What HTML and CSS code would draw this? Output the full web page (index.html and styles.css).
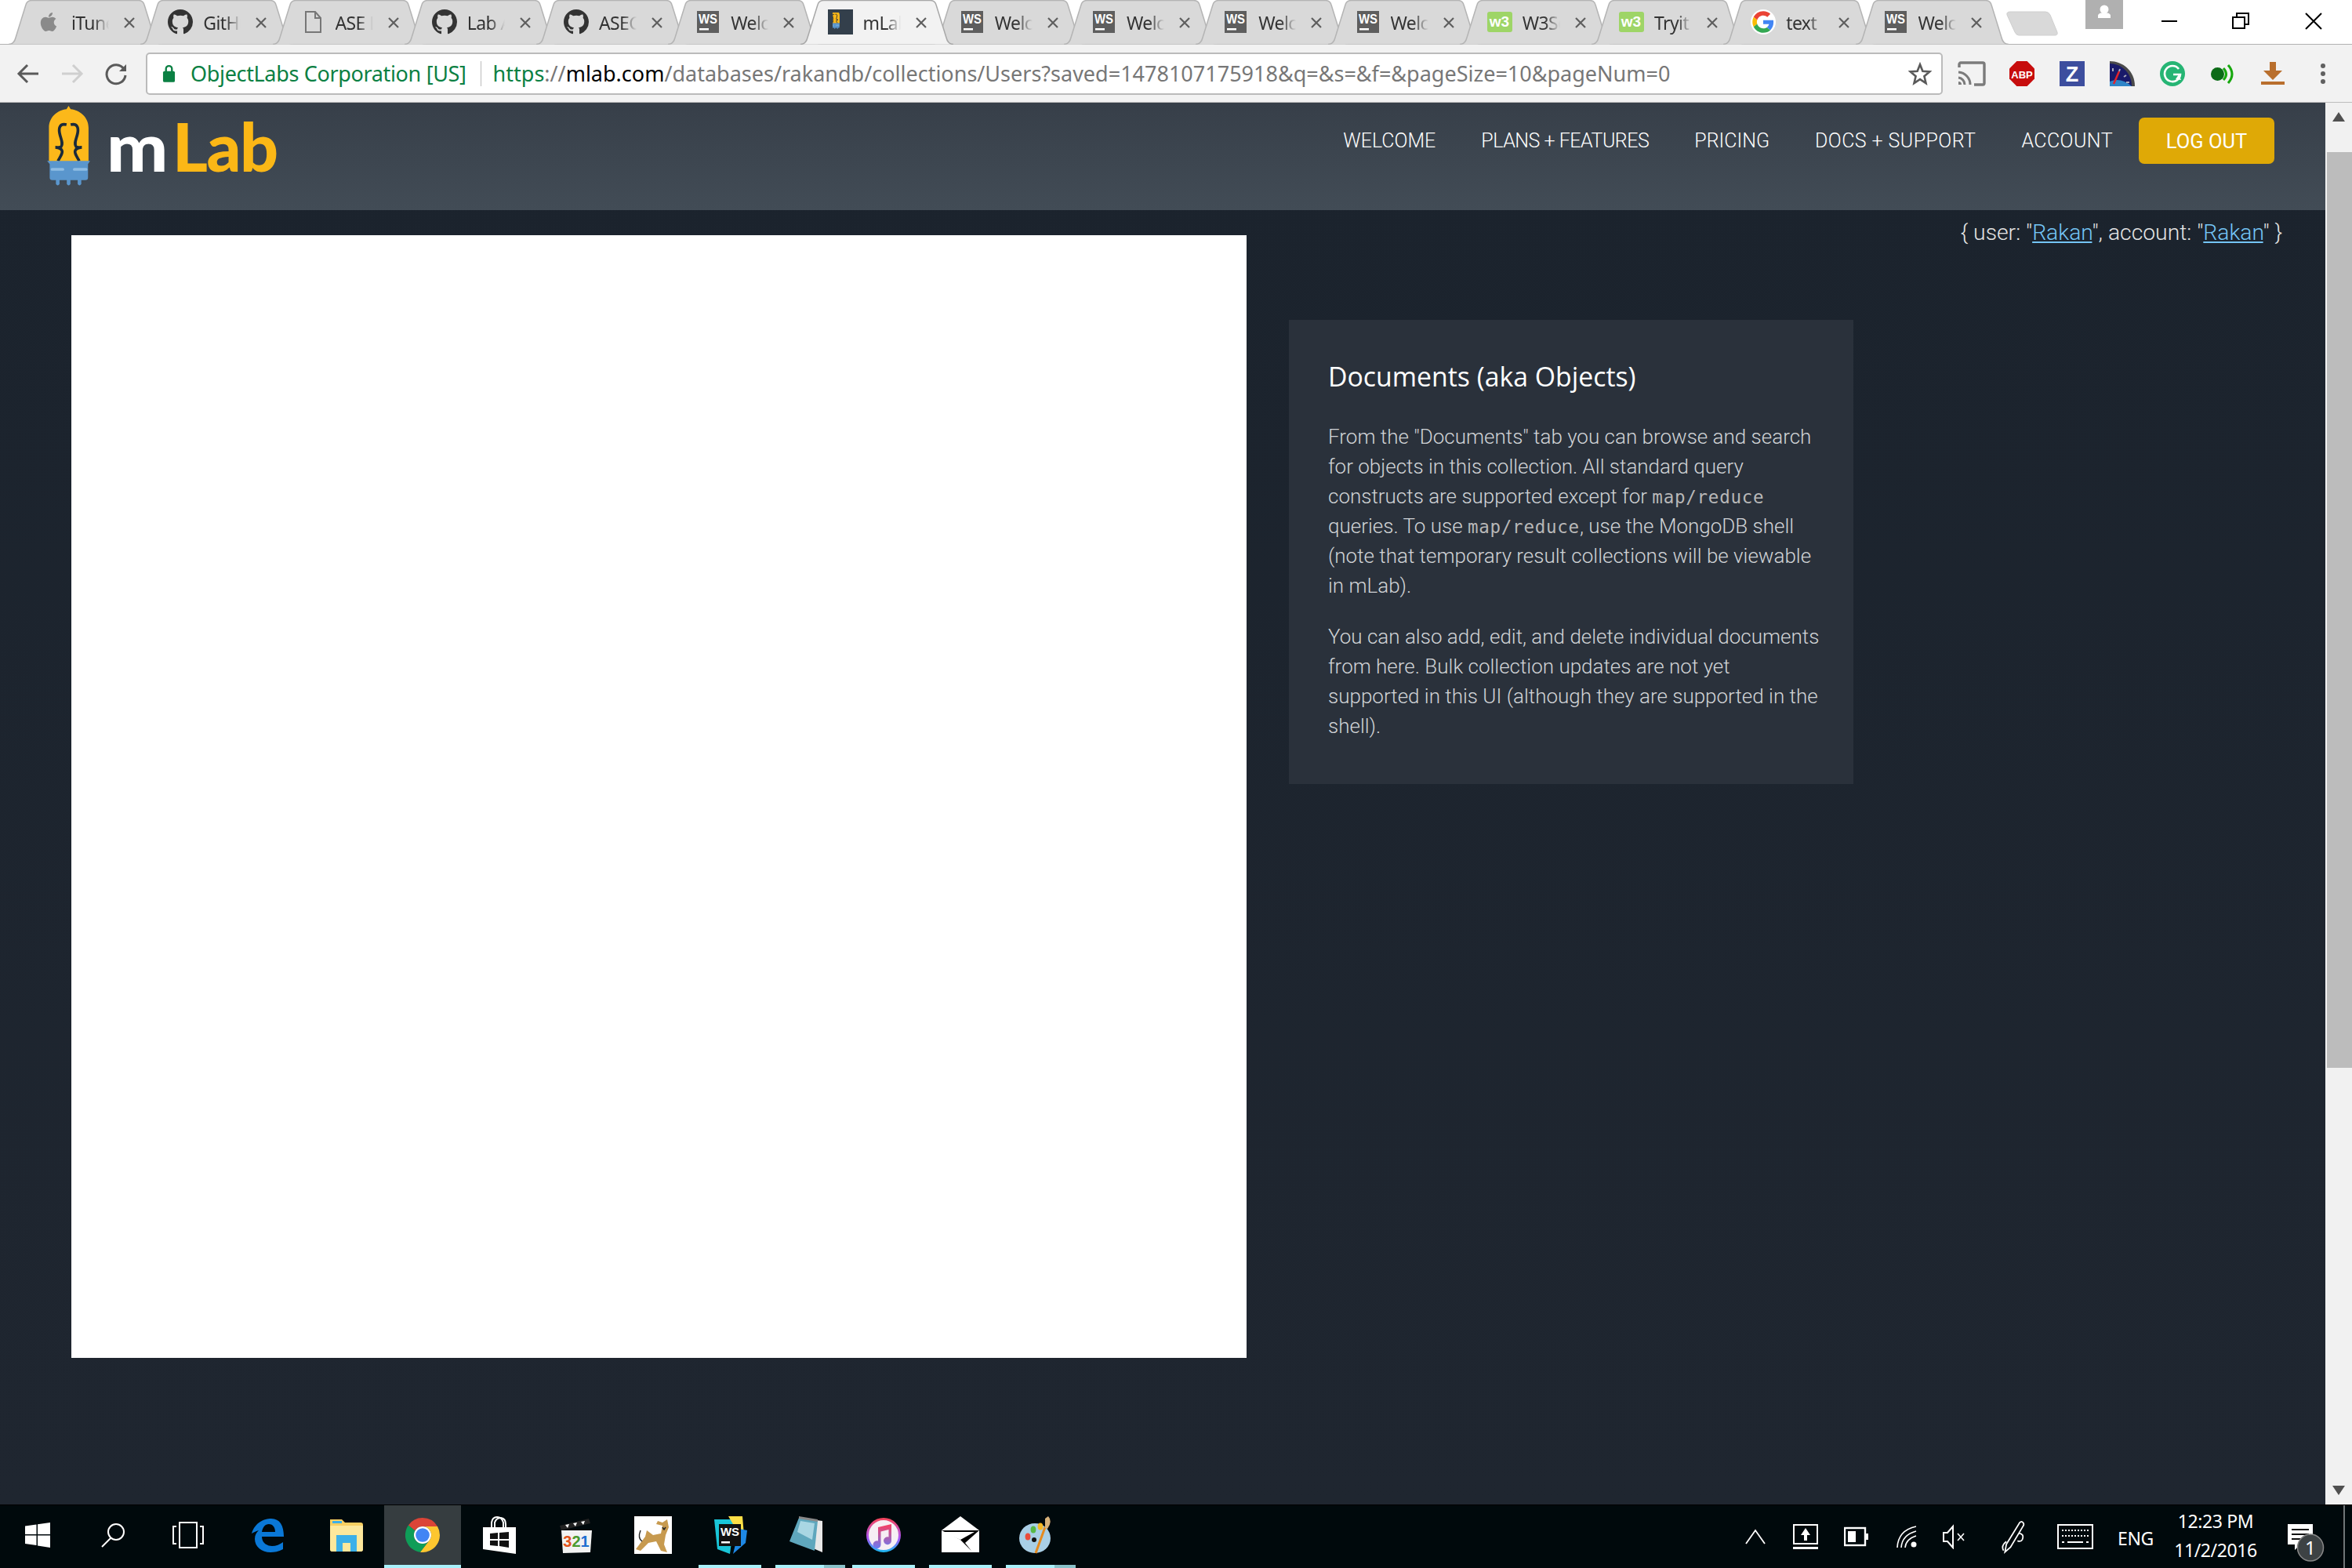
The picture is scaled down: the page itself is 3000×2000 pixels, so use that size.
FILE: index.html
```html
<!DOCTYPE html>
<html lang="en">
<head>
<meta charset="utf-8">
<title>mLab</title>
<link rel="stylesheet" href="styles.css">
</head>
<body>
<svg class="defs" width="0" height="0" aria-hidden="true">
  <defs>
    <symbol id="i-apple" viewBox="0 0 24 24"><path fill="#8a8a8a" d="M17.05 20.28c-.98.95-2.05.8-3.08.35-1.09-.46-2.09-.48-3.24 0-1.44.62-2.2.44-3.06-.35C2.79 15.25 3.51 7.59 9.05 7.31c1.35.07 2.29.74 3.08.8 1.18-.24 2.31-.93 3.57-.84 1.51.12 2.65.72 3.4 1.8-3.12 1.87-2.38 5.98.48 7.13-.57 1.5-1.31 2.99-2.54 4.09zM12.03 7.25c-.15-2.23 1.66-4.07 3.74-4.25.29 2.58-2.34 4.5-3.74 4.25z"/></symbol>
    <symbol id="i-github" viewBox="0 0 16 16"><path fill="#333" d="M8 0C3.58 0 0 3.58 0 8c0 3.54 2.29 6.53 5.47 7.59.4.07.55-.17.55-.38 0-.19-.01-.82-.01-1.49-2.01.37-2.53-.49-2.69-.94-.09-.23-.48-.94-.82-1.13-.28-.15-.68-.52-.01-.53.63-.01 1.08.58 1.23.82.72 1.21 1.87.87 2.33.66.07-.52.28-.87.51-1.07-1.78-.2-3.64-.89-3.64-3.95 0-.87.31-1.59.82-2.15-.08-.2-.36-1.02.08-2.12 0 0 .67-.21 2.2.82.64-.18 1.32-.27 2-.27.68 0 1.36.09 2 .27 1.53-1.04 2.2-.82 2.2-.82.44 1.1.16 1.92.08 2.12.51.56.82 1.27.82 2.15 0 3.07-1.87 3.75-3.65 3.95.29.25.54.73.54 1.48 0 1.07-.01 1.93-.01 2.2 0 .21.15.46.55.38A8.013 8.013 0 0016 8c0-4.42-3.58-8-8-8z"/></symbol>
    <symbol id="i-doc" viewBox="0 0 32 32"><path fill="none" stroke="#777" stroke-width="2" d="M7 3h12l7 8v18H7zM19 3v8h7"/></symbol>
    <symbol id="i-ws" viewBox="0 0 32 32"><rect x="2" y="2" width="28" height="28" fill="#5e5e5e"/><text x="16" y="17.5" text-anchor="middle" font-family="Liberation Sans" font-weight="700" font-size="16" textLength="24" lengthAdjust="spacingAndGlyphs" fill="#fff">WS</text><rect x="5" y="24" width="12" height="2.5" fill="#fff"/></symbol>
    <symbol id="i-w3" viewBox="0 0 32 32"><rect y="3" width="32" height="26" rx="3" fill="#9ed567"/><text x="15.5" y="22" text-anchor="middle" font-family="Liberation Sans" font-weight="700" font-size="19" fill="#fff">w3</text></symbol>
    <symbol id="i-google" viewBox="-4 -4 56 56"><circle cx="24" cy="24" r="28" fill="#fff"/><path fill="#EA4335" d="M24 9.5c3.54 0 6.71 1.22 9.21 3.6l6.85-6.85C35.9 2.38 30.47 0 24 0 14.62 0 6.51 5.38 2.56 13.22l7.98 6.19C12.43 13.72 17.74 9.5 24 9.5z"/><path fill="#4285F4" d="M46.98 24.55c0-1.57-.15-3.09-.38-4.55H24v9.02h12.94c-.58 2.96-2.26 5.48-4.78 7.18l7.73 6c4.51-4.18 7.09-10.36 7.09-17.65z"/><path fill="#FBBC05" d="M10.53 28.59c-.48-1.45-.76-2.99-.76-4.59s.27-3.14.76-4.59l-7.98-6.19C.92 16.46 0 20.12 0 24c0 3.88.92 7.54 2.56 10.78l7.97-6.19z"/><path fill="#34A853" d="M24 48c6.48 0 11.93-2.13 15.89-5.81l-7.73-6c-2.15 1.45-4.92 2.3-8.16 2.3-6.26 0-11.57-4.22-13.47-9.91l-7.98 6.19C6.51 42.62 14.62 48 24 48z"/></symbol>
    <symbol id="i-bulb" viewBox="90 45 166 312">
      <path fill="#fcb81a" d="M97 262V130C97 88 130 62 165 58L173 45L181 58C216 62 250 88 250 130V262z"/>
      <path fill="none" stroke="#1b2a3a" stroke-width="11" d="M165 118C140 112 134 128 138 150C142 172 154 190 144 203C138 208 130 205 122 205C134 206 146 208 148 220C150 232 138 245 132 258M181 118C206 112 212 128 208 150C204 172 192 190 202 203C208 208 216 205 224 205C212 206 200 208 198 220C196 232 208 245 214 258"/>
      <path fill="#5a96cd" d="M90 258H256L248 270V322Q248 332 238 332H222V347Q215 358 208 347V332H180V347Q173 358 166 347V332H138V347Q131 358 124 347V332H110Q100 332 100 322V270z"/>
      <rect x="104" y="285" width="52" height="11" rx="5" fill="#8fbde4"/><rect x="190" y="285" width="56" height="11" rx="5" fill="#8fbde4"/>
    </symbol>
    <symbol id="i-x" viewBox="0 0 16 16"><path stroke="#5f5f5f" stroke-width="2.2" d="M2 2l12 12M14 2L2 14"/></symbol>
    <symbol id="i-ws-color" viewBox="0 0 48 48"><path fill="#19c5d8" d="M4 4H30L24 48L8 42z"/><path fill="#fde047" d="M22 0H40L42 24L28 10z"/><path fill="#1e88e5" d="M28 48L44 34L46 18L36 16z"/><rect x="10" y="10" width="28" height="28" fill="#111"/><text x="24" y="25" text-anchor="middle" font-family="Liberation Sans" font-weight="700" font-size="15" fill="#fff">WS</text><rect x="13" y="32" width="11" height="2.5" fill="#fff"/></symbol>
  </defs>
</svg>

<div class="screen">
  <header class="tabstrip">
    <div class="tab"><svg class="tab-shape" viewBox="0 0 195 57"><path d="M0 56.5C6 56.5 8 52 9 48L22 6C23 2 26 .5 30 .5H165C169 .5 172 2 173 6L186 48C187 52 189 56.5 195 56.5"/></svg><svg class="tab-icon"><use href="#i-apple"/></svg><span class="tab-text">iTunes Connect</span><svg class="tab-x"><use href="#i-x"/></svg></div>
    <div class="tab"><svg class="tab-shape" viewBox="0 0 195 57"><path d="M0 56.5C6 56.5 8 52 9 48L22 6C23 2 26 .5 30 .5H165C169 .5 172 2 173 6L186 48C187 52 189 56.5 195 56.5"/></svg><svg class="tab-icon"><use href="#i-github"/></svg><span class="tab-text">GitHub</span><svg class="tab-x"><use href="#i-x"/></svg></div>
    <div class="tab"><svg class="tab-shape" viewBox="0 0 195 57"><path d="M0 56.5C6 56.5 8 52 9 48L22 6C23 2 26 .5 30 .5H165C169 .5 172 2 173 6L186 48C187 52 189 56.5 195 56.5"/></svg><svg class="tab-icon"><use href="#i-doc"/></svg><span class="tab-text">ASE Lab</span><svg class="tab-x"><use href="#i-x"/></svg></div>
    <div class="tab"><svg class="tab-shape" viewBox="0 0 195 57"><path d="M0 56.5C6 56.5 8 52 9 48L22 6C23 2 26 .5 30 .5H165C169 .5 172 2 173 6L186 48C187 52 189 56.5 195 56.5"/></svg><svg class="tab-icon"><use href="#i-github"/></svg><span class="tab-text">Lab Assignment</span><svg class="tab-x"><use href="#i-x"/></svg></div>
    <div class="tab"><svg class="tab-shape" viewBox="0 0 195 57"><path d="M0 56.5C6 56.5 8 52 9 48L22 6C23 2 26 .5 30 .5H165C169 .5 172 2 173 6L186 48C187 52 189 56.5 195 56.5"/></svg><svg class="tab-icon"><use href="#i-github"/></svg><span class="tab-text">ASECourse</span><svg class="tab-x"><use href="#i-x"/></svg></div>
    <div class="tab"><svg class="tab-shape" viewBox="0 0 195 57"><path d="M0 56.5C6 56.5 8 52 9 48L22 6C23 2 26 .5 30 .5H165C169 .5 172 2 173 6L186 48C187 52 189 56.5 195 56.5"/></svg><svg class="tab-icon"><use href="#i-ws"/></svg><span class="tab-text">Welcome</span><svg class="tab-x"><use href="#i-x"/></svg></div>
    <div class="tab tab-active"><svg class="tab-shape" viewBox="0 0 195 57"><path d="M0 56.5C6 56.5 8 52 9 48L22 6C23 2 26 .5 30 .5H165C169 .5 172 2 173 6L186 48C187 52 189 56.5 195 56.5"/></svg><svg class="tab-icon" viewBox="0 0 32 32"><rect width="32" height="32" y="0" fill="#333f4b"/><svg x="6" y="4" width="20" height="25" viewBox="90 45 166 312"><use href="#i-bulb"/></svg></svg><span class="tab-text">mLab</span><svg class="tab-x"><use href="#i-x"/></svg></div>
    <div class="tab"><svg class="tab-shape" viewBox="0 0 195 57"><path d="M0 56.5C6 56.5 8 52 9 48L22 6C23 2 26 .5 30 .5H165C169 .5 172 2 173 6L186 48C187 52 189 56.5 195 56.5"/></svg><svg class="tab-icon"><use href="#i-ws"/></svg><span class="tab-text">Welcome</span><svg class="tab-x"><use href="#i-x"/></svg></div>
    <div class="tab"><svg class="tab-shape" viewBox="0 0 195 57"><path d="M0 56.5C6 56.5 8 52 9 48L22 6C23 2 26 .5 30 .5H165C169 .5 172 2 173 6L186 48C187 52 189 56.5 195 56.5"/></svg><svg class="tab-icon"><use href="#i-ws"/></svg><span class="tab-text">Welcome</span><svg class="tab-x"><use href="#i-x"/></svg></div>
    <div class="tab"><svg class="tab-shape" viewBox="0 0 195 57"><path d="M0 56.5C6 56.5 8 52 9 48L22 6C23 2 26 .5 30 .5H165C169 .5 172 2 173 6L186 48C187 52 189 56.5 195 56.5"/></svg><svg class="tab-icon"><use href="#i-ws"/></svg><span class="tab-text">Welcome</span><svg class="tab-x"><use href="#i-x"/></svg></div>
    <div class="tab"><svg class="tab-shape" viewBox="0 0 195 57"><path d="M0 56.5C6 56.5 8 52 9 48L22 6C23 2 26 .5 30 .5H165C169 .5 172 2 173 6L186 48C187 52 189 56.5 195 56.5"/></svg><svg class="tab-icon"><use href="#i-ws"/></svg><span class="tab-text">Welcome</span><svg class="tab-x"><use href="#i-x"/></svg></div>
    <div class="tab"><svg class="tab-shape" viewBox="0 0 195 57"><path d="M0 56.5C6 56.5 8 52 9 48L22 6C23 2 26 .5 30 .5H165C169 .5 172 2 173 6L186 48C187 52 189 56.5 195 56.5"/></svg><svg class="tab-icon"><use href="#i-w3"/></svg><span class="tab-text">W3Schools</span><svg class="tab-x"><use href="#i-x"/></svg></div>
    <div class="tab"><svg class="tab-shape" viewBox="0 0 195 57"><path d="M0 56.5C6 56.5 8 52 9 48L22 6C23 2 26 .5 30 .5H165C169 .5 172 2 173 6L186 48C187 52 189 56.5 195 56.5"/></svg><svg class="tab-icon"><use href="#i-w3"/></svg><span class="tab-text">Tryit Editor</span><svg class="tab-x"><use href="#i-x"/></svg></div>
    <div class="tab"><svg class="tab-shape" viewBox="0 0 195 57"><path d="M0 56.5C6 56.5 8 52 9 48L22 6C23 2 26 .5 30 .5H165C169 .5 172 2 173 6L186 48C187 52 189 56.5 195 56.5"/></svg><svg class="tab-icon"><use href="#i-google"/></svg><span class="tab-text">text</span><svg class="tab-x"><use href="#i-x"/></svg></div>
    <div class="tab"><svg class="tab-shape" viewBox="0 0 195 57"><path d="M0 56.5C6 56.5 8 52 9 48L22 6C23 2 26 .5 30 .5H165C169 .5 172 2 173 6L186 48C187 52 189 56.5 195 56.5"/></svg><svg class="tab-icon"><use href="#i-ws"/></svg><span class="tab-text">Welcome</span><svg class="tab-x"><use href="#i-x"/></svg></div>
    <svg class="new-tab" viewBox="0 0 66 32"><path d="M5 1H50Q54 1 56 5L65 27Q66 31 62 31H16Q13 31 11 27L1 5Q0 1 5 1z"/></svg>
    <div class="avatar"><svg viewBox="0 0 48 37"><circle cx="24" cy="12" r="5.5" fill="#fff"/><path fill="#fff" d="M16 23V20Q16 17.5 20 16.5H28Q32 17.5 32 20V23z"/></svg></div>
    <div class="winctl"><svg viewBox="0 0 92 54"><path stroke="#000" stroke-width="2" d="M36 27H56"/></svg></div>
    <div class="winctl"><svg viewBox="0 0 92 54"><path fill="none" stroke="#000" stroke-width="2" d="M35 22H50V36H35zM40 22V17H55V31H50"/></svg></div>
    <div class="winctl"><svg viewBox="0 0 92 54"><path stroke="#000" stroke-width="2" d="M36 17L56 37M56 17L36 37"/></svg></div>
  </header>

  <nav class="toolbar">
    <div class="tool"><svg viewBox="0 0 32 32"><path fill="none" stroke="#5a5a5a" stroke-width="3" d="M29 16H5M15 5L4 16L15 27"/></svg></div>
    <div class="tool"><svg viewBox="0 0 32 32"><path fill="none" stroke="#cfcfcf" stroke-width="3" d="M3 16H27M17 5L28 16L17 27"/></svg></div>
    <div class="tool"><svg viewBox="0 0 32 32"><path fill="none" stroke="#5a5a5a" stroke-width="3" d="M26 10A12 12 0 1 0 28 18"/><path fill="#5a5a5a" d="M20 13H29V4z"/></svg></div>
    <div class="omnibox">
      <svg class="lock" viewBox="0 0 18 26"><path fill="none" stroke="#0b8043" stroke-width="2.5" d="M5 11V7a4 4 0 0 1 8 0v4"/><rect x="1" y="10" width="16" height="15" rx="2" fill="#0b8043"/></svg>
      <span class="org">ObjectLabs Corporation [US]</span>
      <span class="sep"></span>
      <span class="url"><span class="u-green">https</span><span class="u-grey">://</span><span class="u-host">mlab.com</span><span class="u-grey">/databases/rakandb/collections/Users?saved=1478107175918&amp;q=&amp;s=&amp;f=&amp;pageSize=10&amp;pageNum=0</span></span>
      <svg class="star" viewBox="0 0 32 32"><path fill="none" stroke="#5a5a5a" stroke-width="2.8" d="M16 3.5L19.6 12.5L29 13.2L21.8 19.4L24 28.8L16 23.6L8 28.8L10.2 19.4L3 13.2L12.4 12.5z"/></svg>
    </div>
    <div class="exts">
      <div class="tool ext"><svg class="cast" viewBox="0 0 36 32"><path fill="none" stroke="#7b7b7b" stroke-width="3.4" d="M2 8V4a2 2 0 0 1 2-2H32a2 2 0 0 1 2 2V28a2 2 0 0 1-2 2H21"/><path fill="none" stroke="#7b7b7b" stroke-width="3" d="M1 14A16 16 0 0 1 16 30M1 21A9 9 0 0 1 9 30"/><path fill="#7b7b7b" d="M1 26a4 4 0 0 1 4 4H1z"/></svg></div>
      <div class="tool ext"><svg viewBox="0 0 32 32"><path fill="#c70d0d" d="M9.4 0H22.6L32 9.4V22.6L22.6 32H9.4L0 22.6V9.4z"/><text x="16" y="21.5" text-anchor="middle" font-family="Liberation Sans" font-weight="700" font-size="13" fill="#fff">ABP</text></svg></div>
      <div class="tool ext"><svg viewBox="0 0 32 32"><rect width="32" height="32" fill="#3d4e9e"/><text x="16" y="26" text-anchor="middle" font-family="Liberation Sans" font-weight="700" font-size="27" fill="#fff">Z</text></svg></div>
      <div class="tool ext"><svg viewBox="0 0 32 32"><path fill="#4a4a4a" d="M0 0C16 0 32 12 32 32H0z"/><path fill="#191a6a" d="M0 3C14 3 28 14 28 32H0z"/><path fill="#2f85c8" d="M0 26Q14 20 28 32H0z"/><path stroke="#e3222b" stroke-width="2.5" d="M5 29L12 13"/><path stroke="#aab" stroke-width="2" d="M4 9V13M13 10L12 13M21 18L18 20M25 27L21 27"/></svg></div>
      <div class="tool ext"><svg viewBox="0 0 32 32"><circle cx="16" cy="16" r="16" fill="#26b574"/><path fill="none" stroke="#fff" stroke-width="2.6" d="M24 10A10 10 0 1 0 26 17H17"/><path fill="#fff" d="M20 23l4-6 3 7z"/></svg></div>
      <div class="tool ext"><svg viewBox="0 0 32 32"><circle cx="9.5" cy="16.5" r="8.5" fill="#0c6b17"/><path fill="none" stroke="#17a80e" stroke-width="3" d="M17 9Q24 16.5 17 24M23 5Q33 16.5 23 28"/></svg></div>
      <div class="tool ext"><svg viewBox="0 0 32 32"><path fill="#b96f2d" d="M12 1H20V12H28L16 24L4 12H12z"/><rect x="1" y="26" width="30" height="4" fill="#b96f2d"/></svg></div>
      <div class="tool ext"><svg viewBox="0 0 32 32"><g fill="#606060"><circle cx="16" cy="6" r="3"/><circle cx="16" cy="16" r="3"/><circle cx="16" cy="26" r="3"/></g></svg></div>
    </div>
  </nav>

  <div class="window">
    <div class="site">
      <div class="site-head">
        <a class="logo"><svg class="logo-bulb"><use href="#i-bulb"/></svg><span class="logo-text"><span class="logo-m">m</span><span class="logo-lab">Lab</span></span></a>
        <ul class="site-nav">
          <li>WELCOME</li>
          <li class="nav-tight">PLANS + FEATURES</li>
          <li>PRICING</li>
          <li class="nav-wide">DOCS + SUPPORT</li>
          <li class="nav-wide">ACCOUNT</li>
          <li class="logout">LOG OUT</li>
        </ul>
      </div>
      <div class="site-body">
        <div class="blank"></div>
        <aside class="help">
          <h2>Documents (aka Objects)</h2>
          <p>From the "Documents" tab you can browse and search for objects in this collection. All standard query constructs are supported except for <code>map/reduce</code> queries. To use <code>map/reduce</code>, use the MongoDB shell (note that temporary result collections will be viewable in mLab).</p>
          <p>You can also add, edit, and delete individual documents from here. Bulk collection updates are not yet supported in this UI (although they are supported in the shell).</p>
        </aside>
        <div class="whoami">{ user: "<a>Rakan</a>", account: "<a>Rakan</a>" }</div>
      </div>
    </div>
    <div class="scrollbar">
      <div class="sb-btn"><svg viewBox="0 0 16 12"><path fill="#505050" d="M8 0L16 12H0z"/></svg></div>
      <div class="sb-thumb"></div>
      <div class="sb-btn sb-down"><svg viewBox="0 0 16 12"><path fill="#505050" d="M0 0H16L8 12z"/></svg></div>
    </div>
  </div>

  <footer class="taskbar">
    <div class="apps">
      <div class="app app-s"><svg class="ic32" viewBox="0 0 32 32"><path fill="#fff" d="M0 4.5L14.5 2.5V15H0zM16 2.2L32 0V15H16zM0 16.5H14.5V29L0 27zM16 16.5H32V32L16 29.6z"/></svg></div>
      <div class="app app-s"><svg class="ic32" viewBox="0 0 32 32"><circle cx="20" cy="12" r="10" fill="none" stroke="#fff" stroke-width="2"/><path stroke="#fff" stroke-width="2" d="M13.5 19.5L2 31"/></svg></div>
      <div class="app app-s"><svg class="ic40" viewBox="0 0 40 40"><rect x="9" y="4" width="22" height="32" fill="none" stroke="#fff" stroke-width="2"/><path fill="none" stroke="#fff" stroke-width="2" d="M5 9H1V31H5M35 9H39V31H35"/></svg></div>
      <div class="app app-edge"><svg class="ic44" viewBox="0 0 44 44"><path fill="#0a78d7" d="M2 20C6 6 18 1 27 1C38 1 43 10 43 24H15C15 33 23 36 28 36C33 36 38 34 42 31V40C36 43 31 44 26 44C15 44 6 37 6 27C6 22 8 19 11 16C8 17 5 18 2 20zM15 18H32C32 11 28 8 24 8C19 8 16 12 15 18z"/></svg></div>
      <div class="app app-s"><svg class="ic44" viewBox="0 0 44 44"><path fill="#f8cf62" d="M1 2H16L20 6H40Q43 6 43 9V40Q43 43 40 43H4Q1 43 1 40z"/><path fill="#fde89c" d="M1 10H43V40Q43 43 40 43H4Q1 43 1 40z"/><path fill="#3cb0e8" d="M9 43V22H35V43H27V32H17V43z"/><rect x="4" y="4" width="12" height="3" fill="#3cb0e8"/></svg></div>
      <div class="app app-active"><svg class="ic44" viewBox="4 4 40 40"><path fill="#db4437" d="M24 4A20 20 0 0 1 41.3 14H24A10 10 0 0 0 15.3 19L7.5 12.6A20 20 0 0 1 24 4z"/><path fill="#fdc62f" d="M41.3 14A20 20 0 0 1 21.2 43.8L32.7 29A10 10 0 0 0 24 14z"/><path fill="#0f9d58" d="M7.5 12.6A20 20 0 0 0 21.2 43.8L32.7 29A10 10 0 0 1 15.3 19z"/><circle cx="24" cy="24" r="10" fill="#fff"/><circle cx="24" cy="24" r="8" fill="#4285f4"/></svg></div>
      <div class="app"><svg class="ic48" viewBox="0 0 48 48"><path fill="#fff" d="M3 14H45V48L3 42z"/><path fill="none" stroke="#fff" stroke-width="2" d="M14 16V8Q15 1 21 1Q27 1 29 8V16M18 16V8Q20 2 26 2Q32 3 32 10V16"/><path fill="#111" d="M12 22L22 21V29H12zM24 21L36 20V29H24zM12 31H22V38L12 37zM24 31H36V40L24 38z"/></svg></div>
      <div class="app"><svg class="ic48" viewBox="0 0 48 48"><path fill="#222" d="M3 12L40 3L42 9L5 18z"/><path fill="#fff" d="M10 11L15 10L13 15zM20 9L25 8L23 13zM30 7L35 6L33 11z"/><path fill="#f2f2f2" d="M5 18H44L42 46L7 47z"/><text x="24" y="39" text-anchor="middle" font-family="Liberation Sans" font-weight="700" font-size="20"><tspan fill="#e2531c">3</tspan><tspan fill="#4a9a2e">2</tspan><tspan fill="#1e6fd0">1</tspan></text></svg></div>
      <div class="app"><svg class="ic48" viewBox="0 0 48 48"><rect width="48" height="48" fill="#fff"/><path fill="#c79a4f" d="M2 42L14 26L16 18L24 24L34 22L36 12L28 10L30 6L36 8L42 4L44 14L40 24L38 36L42 46L34 44L28 32L18 34L8 44z"/><path stroke="#222" stroke-width="1.4" fill="none" d="M36 14l2 3 2-3M8 18Q4 28 10 32"/></svg></div>
      <div class="app app-run"><svg class="ic48" viewBox="0 0 48 48"><use href="#i-ws-color"/></svg></div>
      <div class="app app-run app-multi"><svg class="ic48" viewBox="0 0 48 48"><path fill="#e8e8e8" d="M14 2L44 6V46L30 40z"/><path fill="#5fa7bd" d="M14 2L38 6L34 44L2 32z"/><path fill="#a9d6e3" d="M16 6L34 9L31 30L12 20z"/><path fill="#888" d="M14 0L38 4L38 7L14 3z"/></svg></div>
      <div class="app app-run"><svg class="ic44" viewBox="0 0 44 44"><circle cx="22" cy="22" r="20.5" fill="#f6eef4" stroke="url(#itg)" stroke-width="3"/><defs><linearGradient id="itg" x1="0" y1="0" x2="0" y2="1"><stop offset="0" stop-color="#f4455f"/><stop offset=".6" stop-color="#a855f7"/><stop offset="1" stop-color="#22b4f0"/></linearGradient><linearGradient id="itn" x1="0" y1="0" x2="0" y2="1"><stop offset="0" stop-color="#fb3e60"/><stop offset="1" stop-color="#6a7bf5"/></linearGradient></defs><path fill="url(#itn)" d="M15 12L32 8V29A5 5 0 1 1 28.5 24.5V15L18.5 17.5V34A5 5 0 1 1 15 29.5z"/></svg></div>
      <div class="app app-run"><svg class="ic48" viewBox="0 0 48 48"><path fill="#fff" d="M24 0L48 18V46H0V18z"/><path fill="#000" d="M0 18H48L30 34L38 44L24 30z"/><path fill="#fff" d="M0 20H42L24 30z"/></svg></div>
      <div class="app app-run app-multi"><svg class="ic48" viewBox="0 0 48 48"><ellipse cx="21" cy="28" rx="20" ry="19" fill="#a9cfe6"/><ellipse cx="12" cy="26" rx="3.4" ry="4.5" fill="#ea4c3b"/><ellipse cx="19" cy="17" rx="3.4" ry="4.5" fill="#58b946"/><ellipse cx="28" cy="13" rx="3.4" ry="4.5" fill="#f7b924"/><circle cx="20" cy="30" r="3" fill="#111"/><path stroke="#e58a1f" stroke-width="3" d="M34 14L22 47"/><path fill="#d8b27a" d="M34 15L34 3L38 0Q44 6 37 16z"/></svg></div>
    </div>
    <div class="tray">
      <span class="t"><svg class="ic26" viewBox="0 0 26 26"><path fill="none" stroke="#fff" stroke-width="1.8" d="M1 22L13 5L25 22"/></svg></span>
      <span class="t"><svg class="ic32" viewBox="0 0 32 32"><rect x="1" y="1" width="30" height="24" fill="none" stroke="#fff" stroke-width="2"/><path fill="#fff" d="M16 5L22 14H18V21H14V14H10zM0 29H32V32H0z"/></svg></span>
      <span class="t"><svg class="ic32" viewBox="0 0 32 32"><rect x="1" y="5" width="26" height="22" fill="none" stroke="#fff" stroke-width="2.4"/><rect x="5" y="9" width="10" height="14" fill="#fff"/><rect x="28" y="12" width="3" height="8" fill="#fff"/></svg></span>
      <span class="t"><svg class="ic32" viewBox="0 0 32 32"><path fill="none" stroke="#fff" stroke-width="1.6" d="M2 30Q3 8 26 3M7 30Q8 14 26 9M12 30Q13 19 26 15"/><circle cx="23" cy="26" r="3.5" fill="#fff"/></svg></span>
      <span class="t"><svg class="ic32" viewBox="0 0 32 32"><path fill="none" stroke="#fff" stroke-width="2" d="M3 11H8L15 3V30L8 22H3z"/><path stroke="#fff" stroke-width="1.6" d="M21 12L29 21M29 12L21 21"/></svg></span>
      <span class="t"><svg class="ic36" viewBox="0 0 36 46"><path fill="none" stroke="#fff" stroke-width="2" d="M8 34L27 3Q30 0 32 3Q34 5 32 8L14 38L6 45zM26 18Q34 19 31 27Q29 31 24 29M8 30Q0 36 4 43"/></svg></span>
      <span class="t"><svg class="ic46" viewBox="0 0 46 32"><rect x="1" y="1" width="44" height="30" fill="none" stroke="#fff" stroke-width="2"/><path stroke="#fff" stroke-width="2" stroke-dasharray="2 2" d="M6 8H40M6 15H40"/><path stroke="#fff" stroke-width="2" d="M6 23H9M13 23H33M37 23H40"/></svg></span>
      <span class="t eng">ENG</span>
      <span class="t clock"><span>12:23 PM</span><span>11/2/2016</span></span>
      <span class="t notif"><svg class="notif-ic" viewBox="0 0 48 48"><path fill="#fff" d="M0 0H32V26H16L9 33V26H0z"/><path stroke="#111" stroke-width="2" d="M5 7H27M5 13H27M5 19H18"/><ellipse cx="29" cy="30" rx="16.5" ry="17" fill="#3d4244" stroke="#888" stroke-width="1.5"/></svg><b class="badge">1</b></span>
      <span class="desk"></span>
    </div>
  </footer>
</div>
</body>
</html>
```

FILE: styles.css
```css
* { box-sizing: border-box; }
html, body { margin: 0; padding: 0; }
body { width: 3000px; height: 2000px; overflow: hidden; background: #000; }
svg { display: block; flex: none; }
.defs { position: absolute; }
.screen { width: 3000px; height: 2000px; display: flex; flex-direction: column; }

/* tab strip */
.tabstrip { height: 57px; flex: none; display: flex; padding-left: 11px; background: #fff; border-bottom: 1px solid #b2b2b2; font-family: "Noto Sans", sans-serif; font-size: 23px; color: #333; }
.tab { position: relative; width: 195px; height: 57px; flex: none; margin-left: -26.75px; padding-left: 35px; display: flex; align-items: center; }
.tab:first-child { margin-left: 0; }
.tab-shape { position: absolute; left: 0; top: 0; width: 195px; height: 57px; }
.tab-shape path { fill: #d9d9d9; stroke: #b4b4b4; stroke-width: 1.5; }
.tab-active { z-index: 2; }
.tab-active .tab-shape path { fill: #f2f2f2; stroke: #a8a8a8; }
.tab-icon { position: relative; width: 32px; height: 32px; margin-top: -1px; }
.tab-text { position: relative; width: 48px; margin-left: 13px; white-space: nowrap; overflow: hidden; letter-spacing: -.6px; -webkit-mask-image: linear-gradient(90deg, #000 60%, transparent); mask-image: linear-gradient(90deg, #000 60%, transparent); }
.tab-x { position: relative; width: 16px; height: 16px; margin-left: 18px; }
.new-tab { width: 66px; height: 32px; margin: 14px 0 0 -3px; }
.new-tab path { fill: #d9d9d9; stroke: #cfcfcf; }
.avatar { width: 48px; height: 37px; margin-left: 35px; background: #b0b0b0; }
.avatar svg { width: 48px; height: 37px; }
.avatar + .winctl { margin-left: 13px; }
.winctl { width: 92px; height: 54px; }
.winctl svg { width: 92px; height: 54px; }

/* toolbar */
.toolbar { height: 74px; flex: none; display: flex; align-items: center; padding-left: 8px; background: #f2f2f2; border-bottom: 1px solid #bdbdbd; }
.tool { width: 56px; height: 48px; display: flex; align-items: center; justify-content: center; }
.tool svg { width: 32px; height: 32px; }
.tool .cast { width: 36px; }
.omnibox { flex: 1; height: 54px; margin: 0 5px 0 10px; display: flex; align-items: center; padding-left: 19px; background: #fff; border: 2px solid #bbb; border-radius: 5px; font-family: "Noto Sans", sans-serif; font-size: 27px; white-space: nowrap; }
.lock { width: 17px; height: 25px; }
.org { margin-left: 19px; color: #0b8043; letter-spacing: -.34px; }
.sep { width: 1px; height: 32px; margin: 0 15px 0 18px; background: #bbb; }
.url { color: #777; letter-spacing: 0; }
.u-green { color: #0b8043; }
.u-grey { color: #777; }
.u-host { color: #000; }
.star { width: 30px; height: 30px; margin-left: auto; margin-right: 12px; }
.exts { display: flex; margin-right: 5px; }
.ext { width: 64px; }

/* window */
.window { flex: 1; min-height: 0; display: flex; }
.site { flex: 1; min-width: 0; display: flex; flex-direction: column; background: linear-gradient(#1b232d, #1f2630); color: #d0d3d6; font-family: Roboto, sans-serif; font-weight: 300; }
.site-head { height: 137px; flex: none; display: flex; padding: 0 65px 0 62px; background: linear-gradient(#373f49, #424c56); color: #fff; }
.logo { display: flex; align-items: flex-start; }
.logo-bulb { width: 55px; height: 103px; margin: 4px 0 0 -2px; }
.logo-text { margin-left: 21px; font-family: Lato, sans-serif; font-weight: 900; font-size: 86px; line-height: 1; margin-top: 12px; letter-spacing: -1.5px; white-space: nowrap; }
.logo-m { display: inline-block; margin-right: 13px; color: #fff; transform: scaleX(1.08); transform-origin: left center; }
.logo-lab { color: #fbb716; }
.site-nav { list-style: none; margin: 19px 0 0 auto; padding: 0; height: 59px; display: flex; align-items: center; gap: 58px; font-size: 25px; }
.nav-tight { letter-spacing: -.5px; }
.nav-wide { letter-spacing: .42px; }
.logout { width: 173px; height: 59px; margin-left: -25px; display: flex; align-items: center; justify-content: center; background: #dfa906; border-radius: 7px; font-weight: 400; font-size: 25.5px; }
.site-body { flex: 1; min-height: 0; display: grid; grid-template-columns: 1499px 720px 1fr; column-gap: 54px; align-items: start; padding-left: 91px; }
.blank { height: 1432px; margin-top: 32px; background: #fff; }
.help { margin-top: 140px; height: 592px; padding: 48px 40px 0 50px; background: #2a313b; font-size: 26px; line-height: 38px; }
.help h2 { margin: 0 0 34px; font-family: "Open Sans", sans-serif; font-weight: 400; font-size: 33.8px; line-height: 48px; color: #fff; }
.help p { margin: 0 0 27px; }
.help code { font-family: "DejaVu Sans Mono", monospace; font-size: 22.5px; line-height: 0; letter-spacing: .75px; font-weight: 400; color: #b8b8b8; }
.whoami { justify-self: end; margin: 9px 55px 0 0; font-size: 28.3px; line-height: 40px; white-space: nowrap; color: #e4e4e4; }
.whoami a { color: #74c5f5; text-decoration: underline; }

/* scrollbar */
.scrollbar { width: 34px; flex: none; display: flex; flex-direction: column; background: #f1f1f1; }
.sb-btn { height: 36px; flex: none; display: flex; align-items: center; justify-content: center; }
.sb-btn svg { width: 16px; height: 12px; }
.sb-thumb { height: 1168px; margin: 27px 0 0 2px; background: #bcbcbc; }
.sb-down { margin-top: auto; }

/* taskbar */
.taskbar { height: 81px; flex: none; display: flex; justify-content: space-between; background: #00090c; border-top: 1px solid #000; font-family: "Noto Sans", sans-serif; color: #fff; }
.apps { display: flex; }
.app { position: relative; width: 98px; height: 80px; display: flex; align-items: center; justify-content: center; padding-bottom: 4px; }
.app-s { width: 96px; }
.app-edge { width: 106px; }
.app-active { background: #363d40; }
.app-active::after, .app-run::after { content: ""; position: absolute; left: 9px; right: 9px; bottom: 0; height: 4px; background: #a9f1fb; }
.app-active::after { left: 0; right: 0; }
.app-multi::before { content: ""; position: absolute; right: 0; bottom: 0; width: 27px; height: 4px; background: #89c1c9; }
.app-multi::after { right: 27px; }
.ic26 { width: 26px; height: 26px; }
.ic32 { width: 32px; height: 32px; }
.ic36 { width: 32px; height: 44px; }
.ic40 { width: 40px; height: 40px; }
.ic44 { width: 44px; height: 44px; }
.ic46 { width: 46px; height: 32px; }
.ic48 { width: 48px; height: 48px; }
.tray { display: grid; grid-template-columns: 64px 64px 66px 66px 50px 102px 56px 98px 106px 110px 11px; align-items: center; font-size: 23px; letter-spacing: -.4px; }
.t { height: 80px; display: flex; align-items: center; justify-content: center; }
.eng { padding-top: 4px; }
.clock { flex-direction: column; gap: 14px; padding-bottom: 2px; white-space: nowrap; line-height: 23px; font-size: 23px; }
.notif { position: relative; }
.notif-ic { width: 48px; height: 48px; margin: 16px 0 0 16px; }
.badge { position: absolute; left: 61px; top: 39px; font-weight: 400; font-size: 24px; line-height: 30px; }
.desk { justify-self: end; width: 2px; height: 80px; background: #6f7577; margin-right: 9px; }
```
